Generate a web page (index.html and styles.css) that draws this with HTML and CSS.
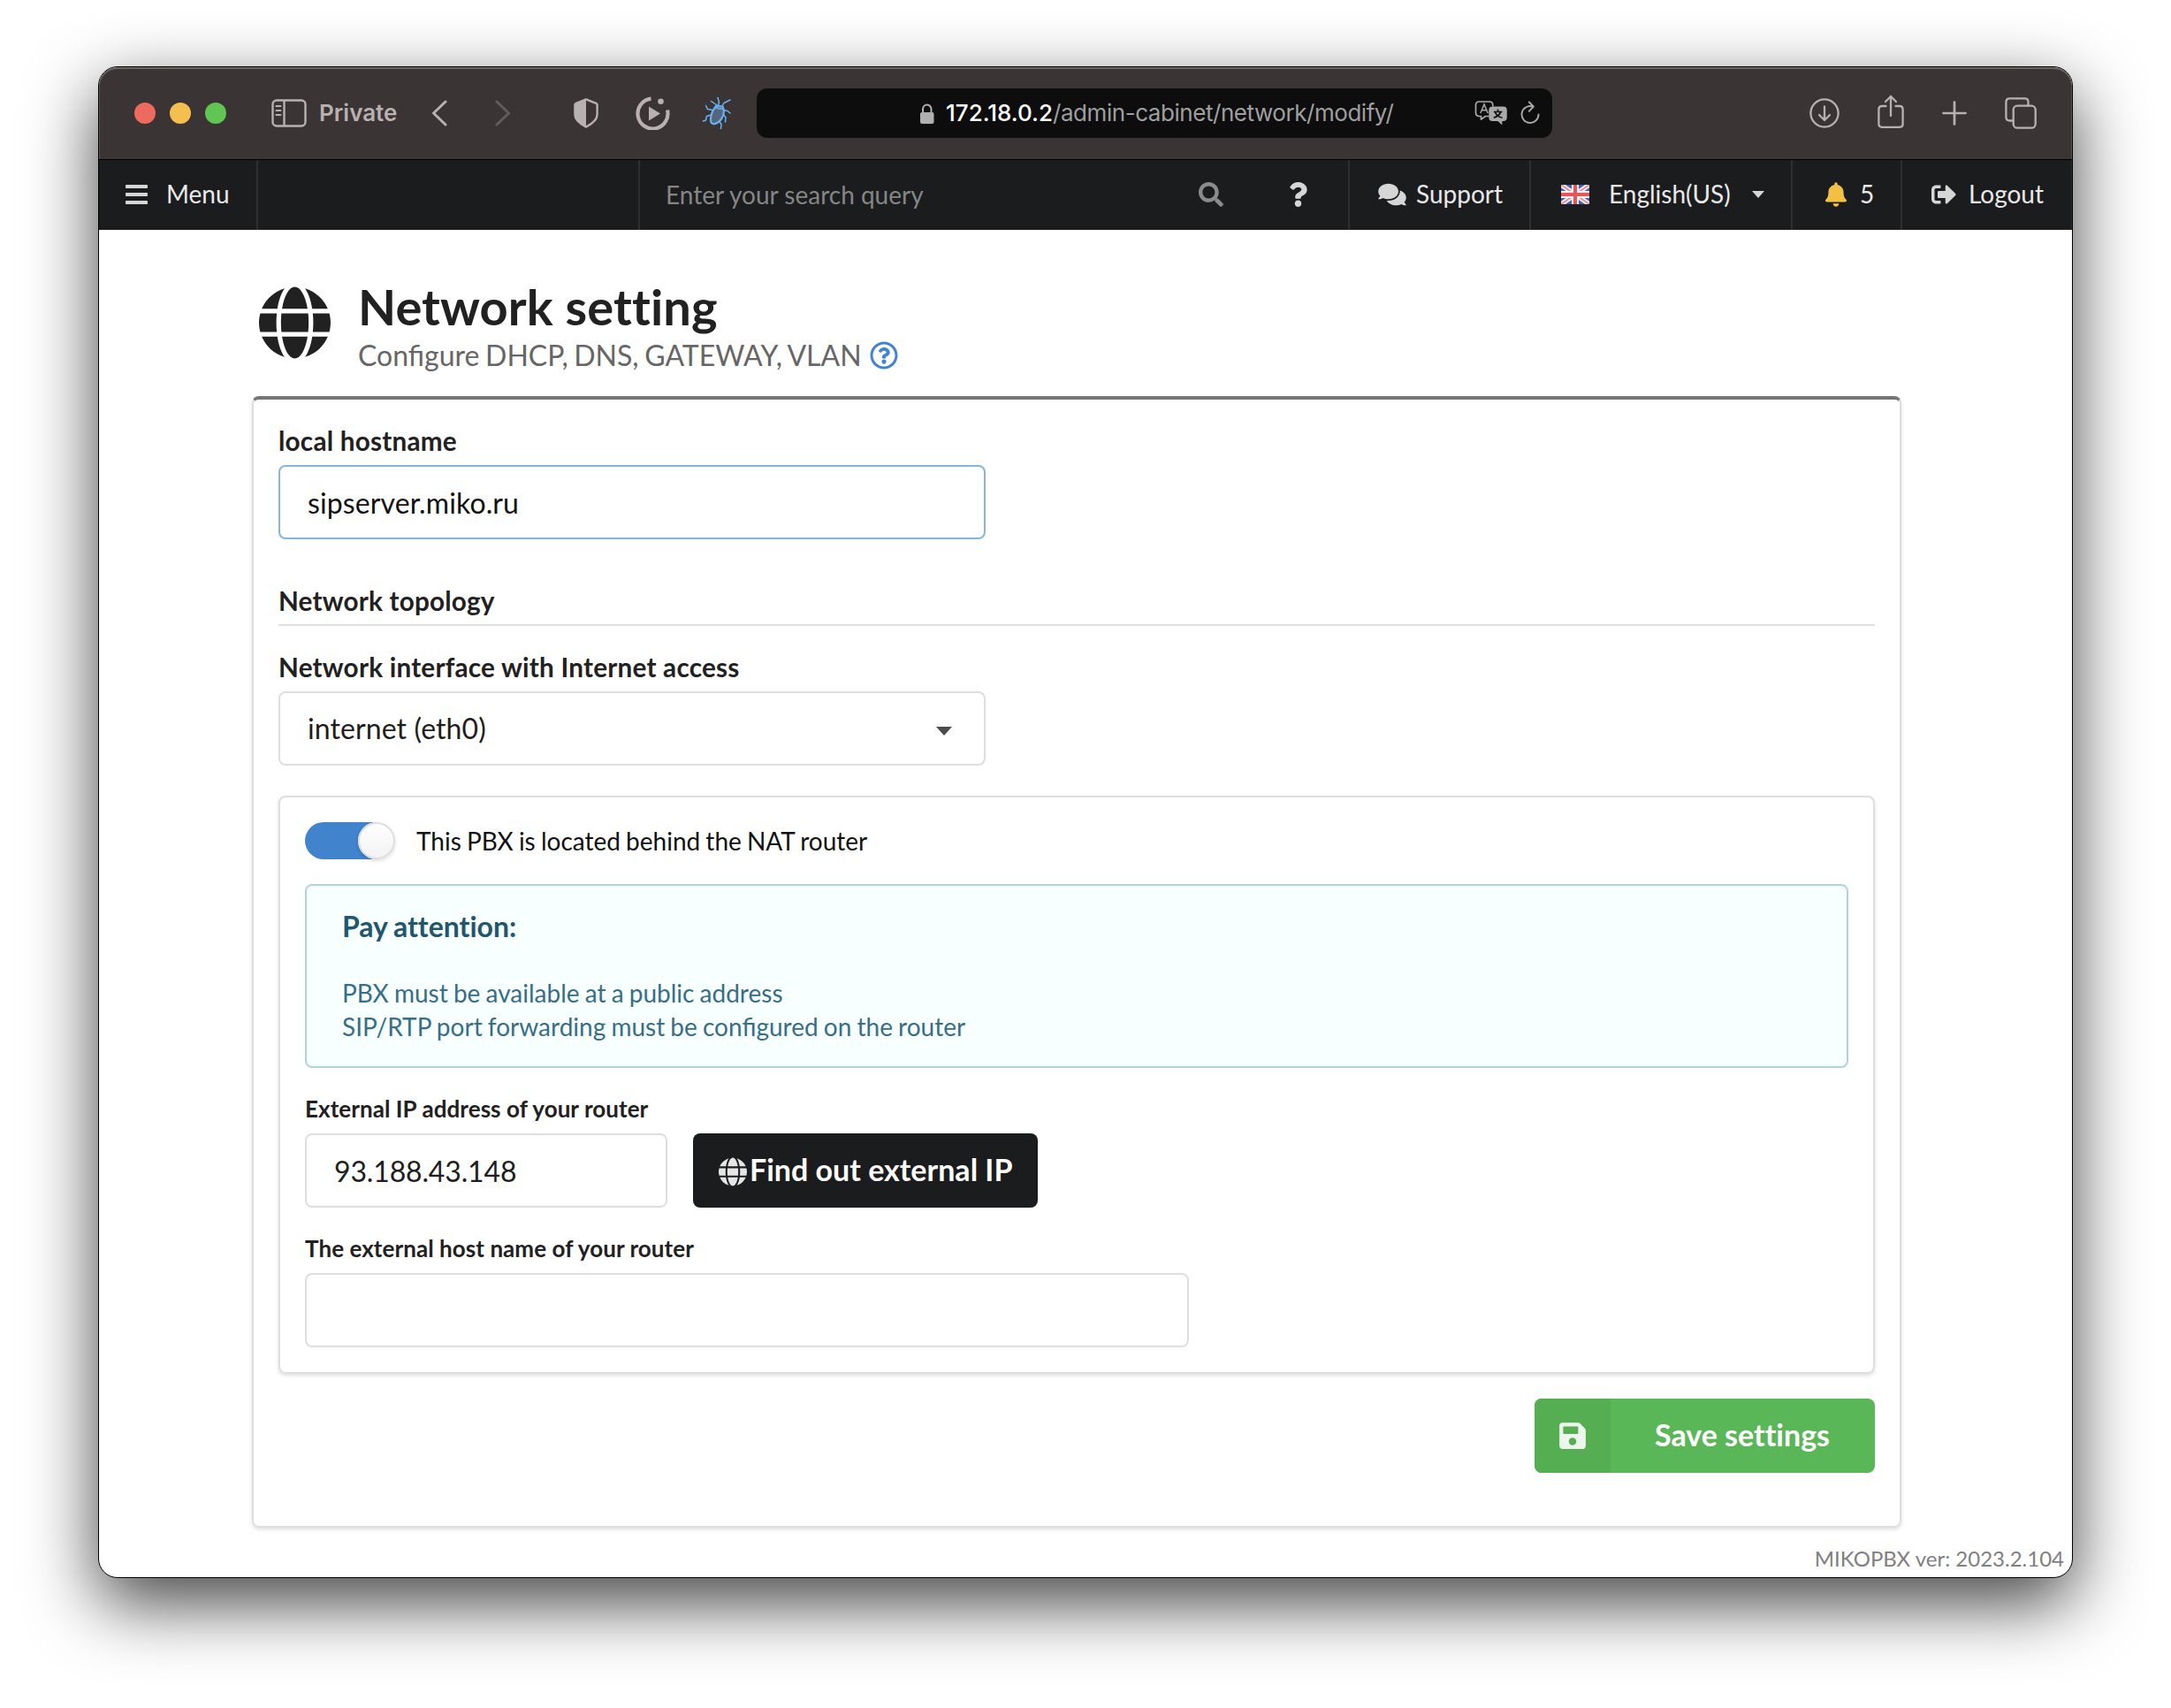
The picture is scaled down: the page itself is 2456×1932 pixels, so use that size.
FILE: index.html
```html
<!DOCTYPE html>
<html lang="en">
<head>
<meta charset="utf-8">
<title>Network setting</title>
<link rel="stylesheet" href="styles.css">
</head>
<body>
<svg class="sprite" aria-hidden="true">
  <symbol id="globe" viewBox="0 0 496 512"><path d="M336.5 160C322 70.7 287.8 8 248 8s-74 62.7-88.5 152h177zM152 256c0 22.2 1.2 43.5 3.3 64h185.3c2.1-20.5 3.3-41.8 3.3-64s-1.2-43.5-3.3-64H155.3c-2.1 20.5-3.3 41.8-3.3 64zm324.7-96c-28.6-67.9-86.5-120.4-158-141.6 24.4 33.8 41.2 84.7 50 141.6h108zM177.2 18.4C105.8 39.6 47.8 92.1 19.3 160h108c8.7-56.9 25.5-107.8 49.9-141.6zM487.4 192H372.7c2.1 21 3.3 42.5 3.3 64s-1.2 43-3.3 64h114.6c5.5-20.5 8.6-41.8 8.6-64s-3.1-43.5-8.5-64zM120 256c0-21.5 1.2-43 3.3-64H8.6C3.2 212.5 0 233.8 0 256s3.2 43.5 8.6 64h114.6c-2-21-3.2-42.5-3.2-64zm39.5 96c14.5 89.3 48.7 152 88.5 152s74-62.7 88.5-152h-177zm159.3 141.6c71.4-21.2 129.4-73.7 158-141.6h-108c-8.8 56.9-25.6 107.8-50 141.6zM19.3 352c28.6 67.9 86.5 120.4 158 141.6-24.4-33.8-41.2-84.7-50-141.6h-108z"/></symbol>
</svg>
<div class="window">
  <header class="toolbar">
    <div class="lights"><i class="red"></i><i class="yellow"></i><i class="green"></i></div>
    <svg class="tb-sidebar" width="40" height="32" viewBox="0 0 40 32" fill="none" stroke="#b9b1b1" stroke-width="2.4"><rect x="1.5" y="1.5" width="37" height="29" rx="4.5"/><path d="M14.5 1.5v29"/><path d="M5.5 8h5M5.5 13h5M5.5 18h5" stroke-width="2" stroke-linecap="round"/></svg>
    <span class="private">Private</span>
    <svg class="tb-back" width="18" height="30" viewBox="0 0 18 30" fill="none" stroke="#b9b1b1" stroke-width="3" stroke-linecap="round" stroke-linejoin="round"><path d="M16 2L2.500 15 16 28"/></svg>
    <svg class="tb-fwd" width="18" height="30" viewBox="0 0 18 30" fill="none" stroke="#635c5c" stroke-width="3" stroke-linecap="round" stroke-linejoin="round"><path d="M2 2l13.500 13L2 28"/></svg>
    <svg class="tb-shield" width="28" height="34" viewBox="0 0 28 34"><path d="M14 1.400L25.300 5.800q1.300.6 1.300 2V18.500C26.600 25.500 20 29.500 14 32.600 8 29.500 1.400 25.500 1.400 18.500V7.800q0-1.400 1.300-2z" fill="none" stroke="#b9b1b1" stroke-width="2.400" stroke-linejoin="round"/><path d="M14 1L2 6v13c0 6 6 10.500 12 13.500z" fill="#b9b1b1"/></svg>
    <svg class="tb-play" width="40" height="38" viewBox="0 0 40 38"><path d="M17.500 2.700A17 17 0 1 0 36 15.500" fill="none" stroke="#b9b1b1" stroke-width="4.200"/><circle cx="28.500" cy="5.800" r="3.300" fill="#b9b1b1"/><path d="M15 11.500v16l13-8z" fill="#b9b1b1"/></svg>
    <svg class="tb-bug" width="34" height="38" viewBox="0 0 34 38" fill="none" stroke="#68b2f4" stroke-width="1.500" stroke-linecap="round" stroke-linejoin="round"><path d="M14 14l2.500-3.500 7 1 1.500 4.500C25 23 21 29 15 31c-4 1-5.500-2-5-6 .5-4 1.500-8 4-11z" fill="#56657a" stroke-width="2.200"/><path d="M15 12q4 2.500 9 2"/><path d="M18.500 10l1-3.500-1.500-5M23 11l2-3.500 7-3.500M17 10l-6.500-4.500M12 15.500l-5.500-1-2-4M24.500 15.500l4.500 1L32 19M10.500 21l-5 1.500-1 4.500-3 1M24.500 20.500l2.500 3.500-.5 5M19.500 28l2.500 3.500-.5 5"/></svg>
    <div class="url">
      <svg class="lock" width="18" height="23" viewBox="0 0 18 23"><rect x="1" y="10" width="15.500" height="13" rx="2" fill="#b0b0b0"/><path d="M4 11V6.500a4.750 5 0 0 1 9.500 0V11" fill="none" stroke="#b0b0b0" stroke-width="2"/></svg>
      <span class="addr"><b>172.18.0.2</b>/admin-cabinet/network/modify/</span>
      <span class="url-tools">
        <svg width="38" height="28" viewBox="0 0 38 28"><path d="M16.500 17.500H12.500L7.500 21V17.500H5.500q-4-.2-4-4V5q0-4 4-4H17q3.800 0 3.800 4v1.500" fill="none" stroke="#a9a9a9" stroke-width="1.700" stroke-linejoin="round"/><path d="M6.800 14L11 4l4.200 10M8.300 10.700h5.400" fill="none" stroke="#a9a9a9" stroke-width="1.500"/><path d="M20.500 6.500h12q4.300 0 4.300 4.300v8q0 4.200-4.300 4.200h-1.200v4.500L26.500 23h-6q-4.200 0-4.200-4.200v-8q0-4.300 4.200-4.300z" fill="#a9a9a9"/><path d="M26.500 9.500v2.500M21.800 12.500h9.600M29.700 13c-1.500 3-4.200 5-8 6.300M23.500 13c1.200 3 4 5.300 8 6.300" fill="none" stroke="#111" stroke-width="1.700"/></svg>
        <svg width="22" height="27" viewBox="0 0 22 27" fill="none" stroke="#a9a9a9" stroke-width="1.900" stroke-linecap="round" stroke-linejoin="round"><path d="M13.500 6.300A9.500 9.500 0 1 0 20.500 15.500"/><path d="M9.800 1.500l5 5-5 5.300"/></svg>
      </span>
    </div>
    <div class="tb-right">
      <svg width="34" height="34" viewBox="0 0 34 34" fill="none" stroke="#b9b1b1" stroke-width="2.300" stroke-linecap="round" stroke-linejoin="round"><circle cx="17" cy="17" r="15.600"/><path d="M17 9.500v15M11 19l6 6 6-6"/></svg>
      <svg width="30" height="38" viewBox="0 0 30 38" fill="none" stroke="#b9b1b1" stroke-width="2.300" stroke-linecap="round" stroke-linejoin="round"><path d="M9.500 13H5q-3.600 0-3.600 3.600v17Q1.400 36.800 5 36.800h20q3.600 0 3.600-3.200v-17Q28.600 13 25 13h-4.500"/><path d="M15 24V2M9 8l6-6 6 6"/></svg>
      <svg width="28" height="28" viewBox="0 0 28 28" fill="none" stroke="#b9b1b1" stroke-width="2.700" stroke-linecap="round"><path d="M14 1.500v25M1.500 14h25"/></svg>
      <svg width="36" height="36" viewBox="0 0 36 36" fill="none" stroke="#b9b1b1" stroke-width="2.300" stroke-linejoin="round"><rect x="9.700" y="9.700" width="25" height="25" rx="4.500"/><path d="M9 26.500H5.500Q1.400 26.500 1.400 22.400V5.500q0-4.100 4.100-4.100h17q4 0 4 4v3.500"/></svg>
    </div>
  </header>
  <nav class="nav">
    <a class="cell menu"><svg width="25" height="22" viewBox="0 0 25 22" fill="#d6d6d6"><rect width="25" height="4" rx=".8"/><rect y="9" width="25" height="4" rx=".8"/><rect y="18" width="25" height="4" rx=".8"/></svg><span>Menu</span></a>
    <div class="cell blank"></div>
    <div class="cell search"><span>Enter your search query</span><svg width="28" height="28" viewBox="0 0 512 512" fill="#8b8b8c"><path d="M505 442.700L405.300 343c-4.500-4.500-10.600-7-17-7H372c27.600-35.300 44-79.700 44-128C416 93.100 322.900 0 208 0S0 93.100 0 208s93.100 208 208 208c48.300 0 92.700-16.400 128-44v16.300c0 6.400 2.500 12.500 7 17l99.700 99.700c9.400 9.400 24.600 9.400 33.900 0l28.300-28.300c9.400-9.400 9.400-24.600.1-34zM208 336c-70.700 0-128-57.200-128-128 0-70.700 57.200-128 128-128 70.700 0 128 57.200 128 128 0 70.700-57.200 128-128 128z"/></svg><svg class="q" width="21" height="28" viewBox="0 0 384 512"><path d="M202.021 0C122.202 0 70.503 32.703 29.914 91.026c-7.363 10.580-5.093 25.086 5.178 32.874l43.138 32.709c10.373 7.865 25.132 6.026 33.253-4.148 25.049-31.381 43.630-49.449 82.757-49.449 30.764 0 68.816 19.799 68.816 49.631 0 22.552-18.617 34.134-48.993 51.164-35.423 19.860-82.299 44.576-82.299 106.405V320c0 13.255 10.745 24 24 24h72.471c13.255 0 24-10.745 24-24v-5.773c0-42.860 125.268-44.645 125.268-160.627C377.504 66.256 286.902 0 202.021 0zM192 373.459c-38.196 0-69.271 31.075-69.271 69.271 0 38.195 31.075 69.270 69.271 69.270s69.271-31.075 69.271-69.271-31.075-69.270-69.271-69.270z"/></svg></div>
    <a class="cell support"><svg width="32" height="28" viewBox="0 0 576 512"><path d="M416 192c0-88.400-93.100-160-208-160S0 103.600 0 192c0 34.300 14.100 65.900 38 92-13.400 30.200-35.500 54.200-35.800 54.500-2.200 2.300-2.800 5.700-1.500 8.700S4.800 352 8 352c36.600 0 66.900-12.300 88.700-25 32.200 15.700 70.300 25 111.300 25 114.900 0 208-71.600 208-160zm122 220c23.900-26 38-57.700 38-92 0-66.900-53.500-124.200-129.300-148.100.9 6.600 1.300 13.300 1.300 20.100 0 105.900-107.700 192-240 192-10.800 0-21.300-.8-31.700-1.900C207.800 439.600 281.800 480 368 480c41 0 79.100-9.200 111.300-25 21.800 12.700 52.100 25 88.700 25 3.200 0 6.100-1.900 7.300-4.800 1.300-2.900.7-6.300-1.500-8.700-.3-.3-22.400-24.200-35.800-54.500z"/></svg><span>Support</span></a>
    <a class="cell lang"><svg class="flag" width="32" height="22" viewBox="0 0 32 22"><rect width="32" height="22" fill="#4a5fb0"/><path d="M0 0l32 22M32 0L0 22" stroke="#f3eef4" stroke-width="5.500"/><path d="M0 0l32 22M32 0L0 22" stroke="#e08a92" stroke-width="1.800"/><path d="M16 0v22M0 11h32" stroke="#f7eff1" stroke-width="8"/><path d="M16 0v22M0 11h32" stroke="#e0575c" stroke-width="4"/></svg><span>English(US)</span><i class="caret"></i></a>
    <a class="cell bell"><svg width="24" height="28" viewBox="0 0 448 512"><path d="M224 512c35.320 0 63.970-28.650 63.970-64H160.030c0 35.350 28.650 64 63.970 64zm215.390-149.710c-19.320-20.760-55.470-51.990-55.470-154.290 0-77.700-54.480-139.900-127.940-155.160V32c0-17.670-14.320-32-31.980-32s-31.980 14.330-31.980 32v20.840C118.560 68.100 64.080 130.300 64.080 208c0 102.300-36.150 133.530-55.470 154.290-6 6.450-8.660 14.160-8.610 21.710.11 16.400 12.980 32 32.100 32h383.800c19.120 0 32-15.600 32.100-32 .05-7.550-2.610-15.270-8.610-21.710z"/></svg><span>5</span></a>
    <a class="cell logout"><svg width="28" height="28" viewBox="0 0 512 512"><path d="M497 273L329 441c-15 15-41 4.500-41-17v-96H152c-13.300 0-24-10.700-24-24v-96c0-13.300 10.700-24 24-24h136V88c0-21.400 25.900-32 41-17l168 168c9.300 9.400 9.300 24.600 0 34zM192 436v-40c0-6.600-5.400-12-12-12H96c-17.700 0-32-14.300-32-32V160c0-17.700 14.300-32 32-32h84c6.600 0 12-5.400 12-12V76c0-6.600-5.400-12-12-12H96c-53 0-96 43-96 96v192c0 53 43 96 96 96h84c6.600 0 12-5.400 12-12z"/></svg><span>Logout</span></a>
  </nav>
  <main class="page">
    <div class="title">
      <svg width="81" height="84"><use href="#globe"/></svg>
      <div>
        <h1>Network setting</h1>
        <p><span>Configure DHCP, DNS, GATEWAY, VLAN</span><svg width="32" height="32" viewBox="0 0 512 512" fill="#4183d4"><path d="M256 8C119.043 8 8 119.083 8 256c0 136.997 111.043 248 248 248s248-111.003 248-248C504 119.083 392.957 8 256 8zm0 448c-110.532 0-200-89.431-200-200 0-110.495 89.472-200 200-200 110.491 0 200 89.471 200 200 0 110.530-89.431 200-200 200zm107.244-255.200c0 67.052-72.421 68.084-72.421 92.863V300c0 6.627-5.373 12-12 12h-45.647c-6.627 0-12-5.373-12-12v-8.659c0-35.745 27.100-50.034 47.579-61.516 17.561-9.845 28.324-16.541 28.324-29.579 0-17.246-21.999-28.693-39.784-28.693-23.189 0-33.894 10.977-48.942 29.969-4.057 5.120-11.460 6.071-16.666 2.124l-27.824-21.098c-5.107-3.872-6.251-11.066-2.644-16.363C184.846 131.491 214.940 112 261.794 112c49.071 0 101.450 38.304 101.450 88.800zM298 368c0 23.159-18.841 42-42 42s-42-18.841-42-42 18.841-42 42-42 42 18.841 42 42z"/></svg></p>
      </div>
    </div>
    <form class="card">
      <label class="label" for="host">local hostname</label>
      <input class="field focus" id="host" type="text" value="sipserver.miko.ru">
      <h3 class="divider">Network topology</h3>
      <div class="label">Network interface with Internet access</div>
      <div class="field select"><span>internet (eth0)</span><i class="caret"></i></div>
      <section class="nat">
        <div class="switch-row"><span class="switch"><i></i></span><span>This PBX is located behind the NAT router</span></div>
        <div class="message">
          <h4>Pay attention:</h4>
          <p>PBX must be available at a public address<br>SIP/RTP port forwarding must be configured on the router</p>
        </div>
        <label class="label small" for="ip">External IP address of your router</label>
        <div class="ip-row">
          <input class="field ip" id="ip" type="text" value="93.188.43.148">
          <button class="find" type="button"><svg width="32" height="33"><use href="#globe"/></svg><span>Find out external IP</span></button>
        </div>
        <label class="label small" for="ext">The external host name of your router</label>
        <input class="field ext" id="ext" type="text">
      </section>
      <button class="save" type="button"><span class="save-icon"><svg width="30" height="34" viewBox="0 0 448 512"><path d="M433.941 129.941l-83.882-83.882A48 48 0 0 0 316.118 32H48C21.490 32 0 53.490 0 80v352c0 26.510 21.490 48 48 48h352c26.510 0 48-21.490 48-48V163.882a48 48 0 0 0-14.059-33.941zM224 416c-35.346 0-64-28.654-64-64 0-35.346 28.654-64 64-64s64 28.654 64 64c0 35.346-28.654 64-64 64zm96-304.520V212c0 6.627-5.373 12-12 12H76c-6.627 0-12-5.373-12-12V108c0-6.627 5.373-12 12-12h228.520c3.183 0 6.235 1.264 8.485 3.515l3.480 3.480A11.996 11.996 0 0 1 320 111.480z"/></svg></span><span class="save-text">Save settings</span></button>
    </form>
    <footer>MIKOPBX ver: 2023.2.104</footer>
  </main>
</div>
</body>
</html>
```
FILE: styles.css
```css
* { box-sizing: border-box; }
body {
  min-height: 1932px;
  margin: 0;
  padding: 75px 0 0 111px;
  background: #fff;
  font-family: Lato, "Liberation Sans", sans-serif;
  font-size: 28px;
  color: #212121;
}
svg { display: block; flex: none; }
h1, h3, h4, p { margin: 0; }
.sprite { display: none; }

.window {
  width: 2234px;
  height: 1710px;
  border: 1px solid #000;
  border-radius: 22px;
  overflow: hidden;
  background: #fff;
  box-shadow: 0 28px 80px rgba(0, 0, 0, .74);
}

/* Browser toolbar */
.toolbar {
  display: flex;
  align-items: center;
  height: 105px;
  padding: 0 40px 1px 40px;
  background: #3b3434;
  border-bottom: 1px solid #000;
  border-radius: 21px 21px 0 0;
  box-shadow: inset 0 2px 0 #6b6765, inset 1px 0 0 #5a5553, inset -1px 0 0 #5a5553;
}
.lights { display: flex; gap: 16px; }
.lights i { width: 24px; height: 24px; border-radius: 50%; }
.red { background: #ed6a5e; }
.yellow { background: #f4bf4f; }
.green { background: #61c554; }
.tb-sidebar { margin-left: 51px; }
.private {
  width: 89px;
  margin-left: 14px;
  padding-top: 1px;
  font: 600 26px/32px Inter, sans-serif;
  color: #b9b1b1;
  white-space: nowrap;
}
.tb-back { margin-left: 38px; }
.tb-fwd { margin-left: 54px; }
.tb-shield { margin-left: 71px; }
.tb-play { margin-left: 42px; }
.tb-bug { margin-left: 35px; }
.url {
  display: flex;
  align-items: center;
  width: 900px;
  height: 56px;
  margin-left: 28px;
  padding: 0 14px 0 184px;
  border-radius: 12px;
  background: #0d0d0d;
}
.lock { margin-top: 1px; }
.addr {
  margin-left: 12px;
  padding-top: 1px;
  font: 400 26px/32px Inter, sans-serif;
  letter-spacing: -.45px;
  color: #9f9f9f;
  white-space: nowrap;
}
.addr b { font-weight: 500; letter-spacing: 0; color: #fff; }
.url-tools { display: flex; align-items: center; gap: 14px; margin-left: auto; }
.tb-right {
  display: grid;
  grid-template-columns: 34px 30px 28px 36px;
  column-gap: 43px;
  align-items: center;
  justify-content: end;
  margin-left: auto;
}
.tb-right svg:nth-child(2) { margin-top: -4px; }

/* Application menu */
.nav {
  display: flex;
  height: 79px;
  background: #1b1c1d;
  color: #e9e9e9;
}
.cell {
  display: flex;
  align-items: center;
  padding-bottom: 1px;
  border-right: 2px solid #2d2e2f;
  white-space: nowrap;
  fill: #d6d6d6;
}
.cell span { margin-top: -2px; }
.menu { width: 180px; padding-left: 30px; gap: 21px; }
.blank { width: 432px; }
.search { width: 803px; padding-left: 29px; color: #858686; }
.search span { width: 603px; margin-top: 0; }
.search .q { margin-left: 74px; }
.support { width: 205px; padding-left: 32px; gap: 11px; }
.lang { width: 296px; padding-left: 34px; }
.lang span { width: 139px; margin-left: 22px; }
.caret {
  border: 7px solid transparent;
  border-top: 8px solid #d6d6d6;
  border-bottom: 0;
}
.lang .caret { margin-left: 23px; }
.bell { width: 124px; padding-left: 37px; gap: 15px; }
.bell svg { fill: #f2c045; }
.logout { width: 192px; padding-left: 33px; gap: 14px; border-right-width: 1px; }

/* Page heading */
.page { padding: 60px 193px 0 173px; }
.title { display: flex; height: 128px; padding: 3px 0 0 8px; }
.title > svg { fill: #212121; }
.title > div { margin-left: 31px; }
h1 {
  margin: -8px 0 4px;
  font-size: 56px;
  line-height: 64px;
  font-weight: 700;
  letter-spacing: .1px;
  font-variant-ligatures: none;
}
.title p {
  display: flex;
  align-items: center;
  gap: 9px;
  font-size: 32px;
  line-height: 38px;
  word-spacing: -1.6px;
  color: #666;
}

/* Settings form */
.card {
  height: 1280px;
  padding: 28px;
  border: 2px solid #dededf;
  border-top: 4px solid #767676;
  border-radius: 8px;
  box-shadow: 0 2px 4px rgba(34, 36, 38, .15);
}
.label {
  display: block;
  margin-bottom: 8px;
  font-size: 29.7px;
  line-height: 38px;
  font-weight: 700;
  letter-spacing: .22px;
}
.label.small { margin: 30px 0 12px; font-size: 26px; line-height: 32px; letter-spacing: .06px; }
.field {
  display: block;
  width: 800px;
  height: 84px;
  margin: 0;
  padding: 0 31px;
  border: 2px solid #dededf;
  border-radius: 8px;
  background: #fff;
  font: 400 32px/38px Lato, "Liberation Sans", sans-serif;
  letter-spacing: .1px;
  color: #1e1e1e;
  outline: 0;
}
.field.focus { border-color: #85b7d9; color: #111; }
.divider {
  margin: 51px 0 28px;
  padding-bottom: 7px;
  border-bottom: 2px solid #dfdfdf;
  font-size: 29.7px;
  line-height: 38px;
  letter-spacing: .2px;
}
.select { display: flex; align-items: center; justify-content: space-between; padding-right: 36px; }
.select .caret { border-width: 10px 9px 0; border-top-color: #4c4c4c; margin-top: 6px; }
.nat {
  height: 654px;
  margin-top: 34px;
  padding: 28px;
  border: 2px solid #dededf;
  border-radius: 8px;
  box-shadow: 0 2px 4px rgba(34, 36, 38, .15);
}
.switch-row { display: flex; align-items: center; height: 42px; color: #111; word-spacing: -1px; }
.switch {
  display: flex;
  width: 98px;
  height: 42px;
  margin-right: 28px;
  padding-left: 60px;
  border-radius: 21px;
  background: #4183cc;
}
.switch i {
  flex: none;
  width: 42px;
  height: 42px;
  border-radius: 50%;
  background: linear-gradient(#fff, #f2f2f2);
  box-shadow: 0 2px 4px rgba(34, 36, 38, .15), inset 0 0 0 2px #dededf;
}
.message {
  height: 208px;
  margin-top: 28px;
  padding: 27px 40px;
  border: 2px solid #aed5dd;
  border-radius: 8px;
  background: #f8ffff;
  color: #376e87;
  line-height: 38px;
  word-spacing: -1px;
}
.message h4 { margin-bottom: 37px; font-size: 32px; color: #21566c; font-variant-ligatures: none; }
.ip-row { display: flex; gap: 29px; }
.field.ip { width: 410px; letter-spacing: -.15px; }
.field.ext { width: 1000px; }
button {
  padding: 0;
  border: 0;
  font: 700 34px/38px Lato, "Liberation Sans", sans-serif;
  font-variant-ligatures: none;
  color: #fff;
  white-space: nowrap;
}
.find {
  display: flex;
  align-items: center;
  width: 390px;
  height: 84px;
  padding-left: 29px;
  gap: 3px;
  border-radius: 8px;
  background: #1b1c1d;
}
.find svg { fill: #e5e5e5; margin-top: 2px; }
.find span { margin-top: -3px; }
.save {
  display: flex;
  width: 385px;
  height: 84px;
  margin: 28px 0 0 auto;
  border-radius: 8px;
  overflow: hidden;
  background: #5ab757;
}
.save-icon {
  display: flex;
  align-items: center;
  justify-content: center;
  width: 86px;
  height: 84px;
  background: #56ae52;
  fill: #edf6ed;
}
.save-text { margin-left: 50px; line-height: 81px; }
footer {
  margin: 19px -184px 0 0;
  font-size: 24px;
  line-height: 32px;
  text-align: right;
  color: #808080;
}
```
